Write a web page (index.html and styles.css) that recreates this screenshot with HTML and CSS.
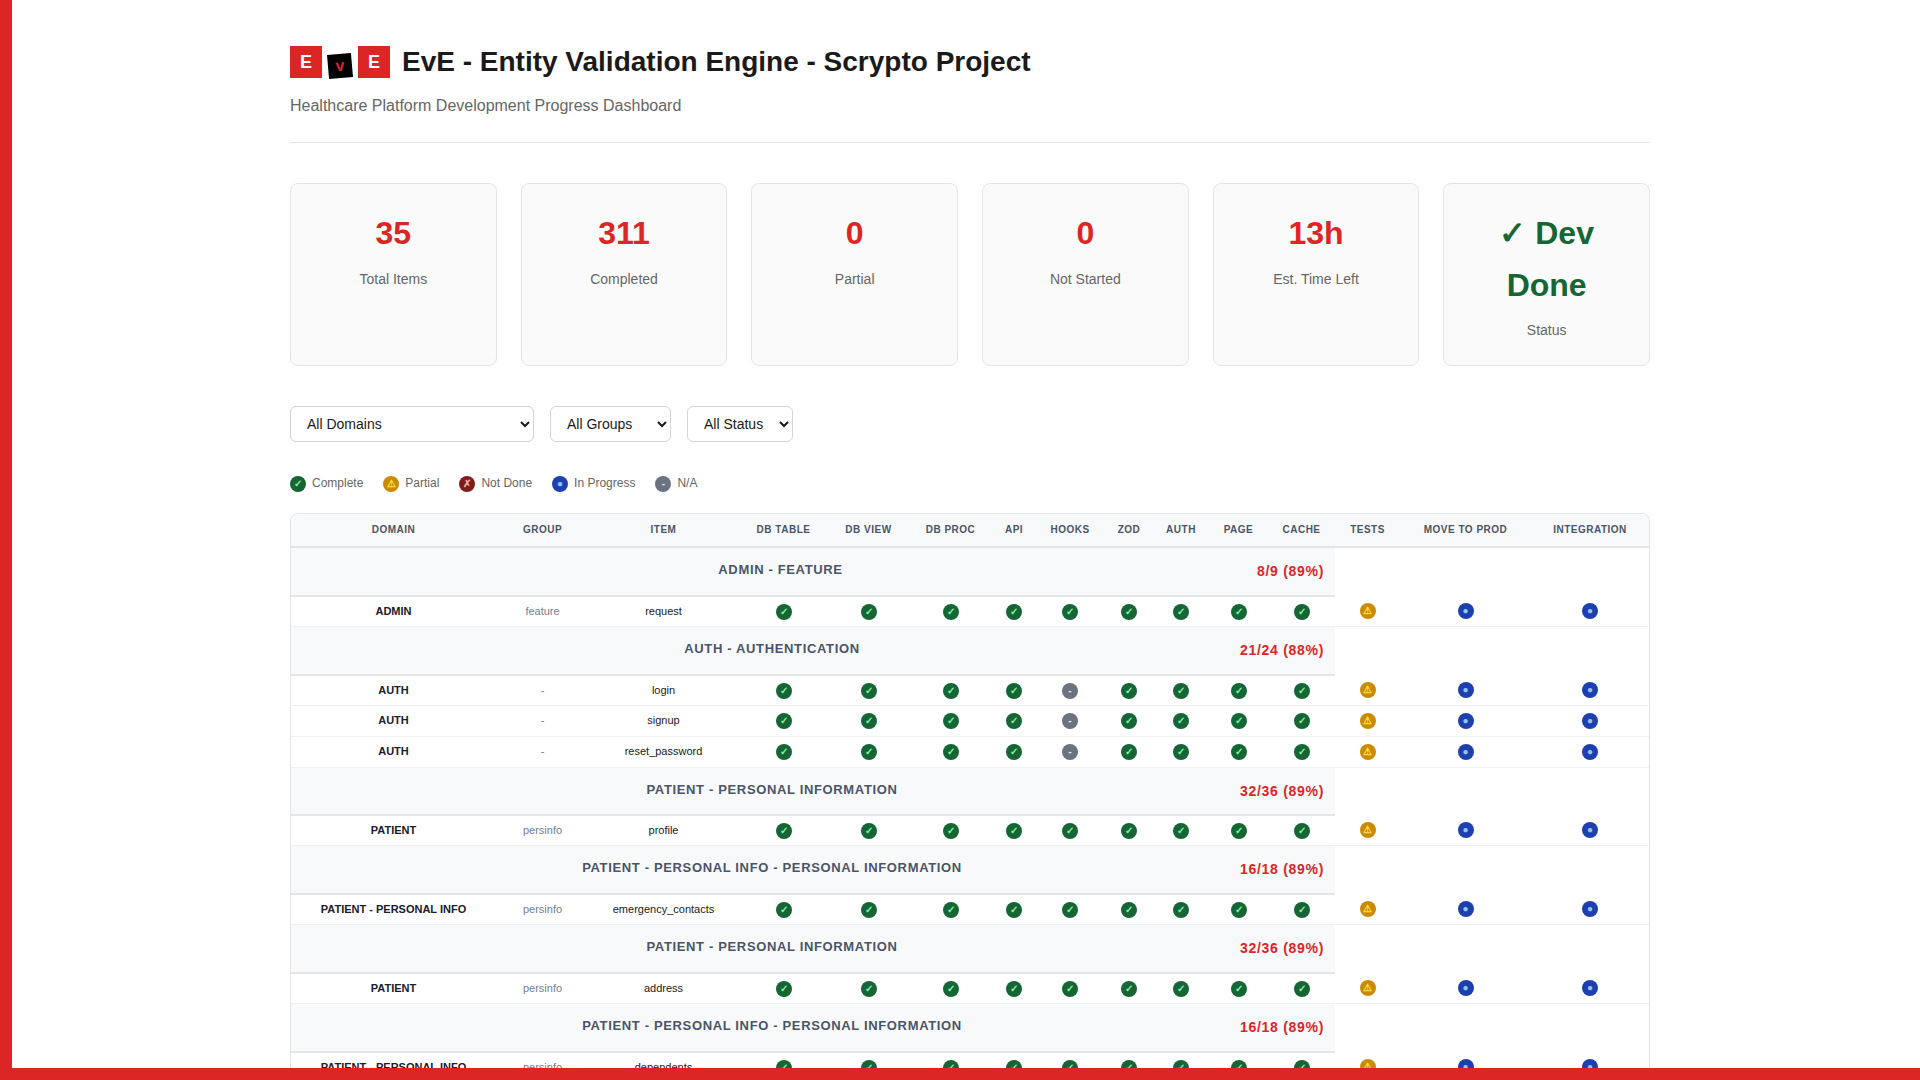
FILE: index.html
```html
<!DOCTYPE html>
<html lang="en">
<head>
<meta charset="utf-8">
<title>EvE - Entity Validation Engine</title>
<link rel="stylesheet" href="styles.css">
</head>
<body>
<div class="edge edge-left"></div>
<div class="edge edge-bottom"></div>
<main class="page">
  <header class="head">
    <div class="title-row">
      <div class="logo">
        <span class="tile">E</span>
        <span class="tile tile-v">v</span>
        <span class="tile">E</span>
      </div>
      <h1>EvE - Entity Validation Engine - Scrypto Project</h1>
    </div>
    <p class="subtitle">Healthcare Platform Development Progress Dashboard</p>
  </header>

  <section class="cards">
    <div class="card"><div class="num">35</div><div class="lbl">Total Items</div></div>
    <div class="card"><div class="num">311</div><div class="lbl">Completed</div></div>
    <div class="card"><div class="num">0</div><div class="lbl">Partial</div></div>
    <div class="card"><div class="num">0</div><div class="lbl">Not Started</div></div>
    <div class="card"><div class="num">13h</div><div class="lbl">Est. Time Left</div></div>
    <div class="card"><div class="num num-ok">✓ Dev Done</div><div class="lbl">Status</div></div>
  </section>

  <section class="filters">
    <select class="sel sel-domain"><option>All Domains</option></select>
    <select class="sel sel-group"><option>All Groups</option></select>
    <select class="sel sel-status"><option>All Status</option></select>
  </section>

  <section class="legend">
    <span class="key"><span class="b ok">✓</span>Complete</span>
    <span class="key"><span class="b pa">⚠</span>Partial</span>
    <span class="key"><span class="b no">✗</span>Not Done</span>
    <span class="key"><span class="b pr">●</span>In Progress</span>
    <span class="key"><span class="b na">-</span>N/A</span>
  </section>

  <div class="table-wrap">
    <table>
      <colgroup>
        <col class="c1"><col class="c2"><col class="c3"><col class="c4"><col class="c5"><col class="c6"><col class="c7"><col class="c8"><col class="c9"><col class="c10"><col class="c11"><col class="c12"><col class="c13"><col class="c14"><col class="c15">
      </colgroup>
      <thead>
        <tr><th>Domain</th><th>Group</th><th>Item</th><th>DB Table</th><th>DB View</th><th>DB Proc</th><th>API</th><th>Hooks</th><th>Zod</th><th>Auth</th><th>Page</th><th>Cache</th><th>Tests</th><th>Move to Prod</th><th>Integration</th></tr>
      </thead>
      <tbody>
        <tr class="grp"><td colspan="12"><div class="grp-in"><span class="grp-t">ADMIN - FEATURE</span><span class="grp-p">8/9 (89%)</span></div></td></tr>
        <tr><td class="dom">ADMIN</td><td class="gr">feature</td><td class="it">request</td><td><span class="b ok">✓</span></td><td><span class="b ok">✓</span></td><td><span class="b ok">✓</span></td><td><span class="b ok">✓</span></td><td><span class="b ok">✓</span></td><td><span class="b ok">✓</span></td><td><span class="b ok">✓</span></td><td><span class="b ok">✓</span></td><td><span class="b ok">✓</span></td><td><span class="b pa">⚠</span></td><td><span class="b pr">●</span></td><td><span class="b pr">●</span></td></tr>

        <tr class="grp"><td colspan="12"><div class="grp-in"><span class="grp-t">AUTH - AUTHENTICATION</span><span class="grp-p">21/24 (88%)</span></div></td></tr>
        <tr><td class="dom">AUTH</td><td class="gr">-</td><td class="it">login</td><td><span class="b ok">✓</span></td><td><span class="b ok">✓</span></td><td><span class="b ok">✓</span></td><td><span class="b ok">✓</span></td><td><span class="b na">-</span></td><td><span class="b ok">✓</span></td><td><span class="b ok">✓</span></td><td><span class="b ok">✓</span></td><td><span class="b ok">✓</span></td><td><span class="b pa">⚠</span></td><td><span class="b pr">●</span></td><td><span class="b pr">●</span></td></tr>
        <tr><td class="dom">AUTH</td><td class="gr">-</td><td class="it">signup</td><td><span class="b ok">✓</span></td><td><span class="b ok">✓</span></td><td><span class="b ok">✓</span></td><td><span class="b ok">✓</span></td><td><span class="b na">-</span></td><td><span class="b ok">✓</span></td><td><span class="b ok">✓</span></td><td><span class="b ok">✓</span></td><td><span class="b ok">✓</span></td><td><span class="b pa">⚠</span></td><td><span class="b pr">●</span></td><td><span class="b pr">●</span></td></tr>
        <tr><td class="dom">AUTH</td><td class="gr">-</td><td class="it">reset_password</td><td><span class="b ok">✓</span></td><td><span class="b ok">✓</span></td><td><span class="b ok">✓</span></td><td><span class="b ok">✓</span></td><td><span class="b na">-</span></td><td><span class="b ok">✓</span></td><td><span class="b ok">✓</span></td><td><span class="b ok">✓</span></td><td><span class="b ok">✓</span></td><td><span class="b pa">⚠</span></td><td><span class="b pr">●</span></td><td><span class="b pr">●</span></td></tr>

        <tr class="grp"><td colspan="12"><div class="grp-in"><span class="grp-t">PATIENT - PERSONAL INFORMATION</span><span class="grp-p">32/36 (89%)</span></div></td></tr>
        <tr><td class="dom">PATIENT</td><td class="gr">persinfo</td><td class="it">profile</td><td><span class="b ok">✓</span></td><td><span class="b ok">✓</span></td><td><span class="b ok">✓</span></td><td><span class="b ok">✓</span></td><td><span class="b ok">✓</span></td><td><span class="b ok">✓</span></td><td><span class="b ok">✓</span></td><td><span class="b ok">✓</span></td><td><span class="b ok">✓</span></td><td><span class="b pa">⚠</span></td><td><span class="b pr">●</span></td><td><span class="b pr">●</span></td></tr>

        <tr class="grp"><td colspan="12"><div class="grp-in"><span class="grp-t">PATIENT - PERSONAL INFO - PERSONAL INFORMATION</span><span class="grp-p">16/18 (89%)</span></div></td></tr>
        <tr><td class="dom">PATIENT - PERSONAL INFO</td><td class="gr">persinfo</td><td class="it">emergency_contacts</td><td><span class="b ok">✓</span></td><td><span class="b ok">✓</span></td><td><span class="b ok">✓</span></td><td><span class="b ok">✓</span></td><td><span class="b ok">✓</span></td><td><span class="b ok">✓</span></td><td><span class="b ok">✓</span></td><td><span class="b ok">✓</span></td><td><span class="b ok">✓</span></td><td><span class="b pa">⚠</span></td><td><span class="b pr">●</span></td><td><span class="b pr">●</span></td></tr>

        <tr class="grp"><td colspan="12"><div class="grp-in"><span class="grp-t">PATIENT - PERSONAL INFORMATION</span><span class="grp-p">32/36 (89%)</span></div></td></tr>
        <tr><td class="dom">PATIENT</td><td class="gr">persinfo</td><td class="it">address</td><td><span class="b ok">✓</span></td><td><span class="b ok">✓</span></td><td><span class="b ok">✓</span></td><td><span class="b ok">✓</span></td><td><span class="b ok">✓</span></td><td><span class="b ok">✓</span></td><td><span class="b ok">✓</span></td><td><span class="b ok">✓</span></td><td><span class="b ok">✓</span></td><td><span class="b pa">⚠</span></td><td><span class="b pr">●</span></td><td><span class="b pr">●</span></td></tr>

        <tr class="grp"><td colspan="12"><div class="grp-in"><span class="grp-t">PATIENT - PERSONAL INFO - PERSONAL INFORMATION</span><span class="grp-p">16/18 (89%)</span></div></td></tr>
        <tr><td class="dom">PATIENT - PERSONAL INFO</td><td class="gr">persinfo</td><td class="it">dependents</td><td><span class="b ok">✓</span></td><td><span class="b ok">✓</span></td><td><span class="b ok">✓</span></td><td><span class="b ok">✓</span></td><td><span class="b ok">✓</span></td><td><span class="b ok">✓</span></td><td><span class="b ok">✓</span></td><td><span class="b ok">✓</span></td><td><span class="b ok">✓</span></td><td><span class="b pa">⚠</span></td><td><span class="b pr">●</span></td><td><span class="b pr">●</span></td></tr>
      </tbody>
    </table>
  </div>
</main>
</body>
</html>
```
FILE: styles.css
```css
* { box-sizing: border-box; }
html, body { height: 100%; overflow: hidden; }
body {
  margin: 0;
  background: #fff;
  color: #1a1a1a;
  font-family: "Liberation Sans", Arial, sans-serif;
  line-height: 1.6;
}
.edge { position: fixed; background: #dc2626; z-index: 5; }
.edge-left { left: 0; top: 0; bottom: 0; width: 12px; }
.edge-bottom { left: 0; right: 0; bottom: 0; height: 12px; }

.page { width: 1360px; margin-left: 290px; padding-top: 40px; }

.head { padding-bottom: 24px; border-bottom: 1px solid #e5e5e5; margin-bottom: 40px; }
.title-row { display: flex; align-items: center; gap: 12px; }
.logo { display: flex; align-items: center; gap: 6px; }
.tile {
  width: 32px; height: 32px; background: #dc2626; color: #fff;
  display: flex; align-items: center; justify-content: center;
  font-weight: 700; font-size: 18px; line-height: 1;
}
.tile-v {
  width: 24px; height: 24px; background: #000; color: #dc2626;
  font-size: 16px; transform: rotate(-5deg); margin-top: 8px;
}
h1 { margin: 0; font-size: 28px; font-weight: 700; line-height: 1.6; color: #1a1a1a; }
.subtitle { margin: 8px 0 0; font-size: 16px; color: #666; }

.cards { display: grid; grid-template-columns: repeat(6, 1fr); gap: 24px; margin-bottom: 40px; }
.card {
  background: #fafafa; border: 1px solid #e5e5e5; border-radius: 8px;
  padding: 24px; text-align: center;
}
.num { font-size: 32px; font-weight: 700; color: #dc2626; margin-bottom: 8px; }
.num-ok { color: #166534; }
.lbl { font-size: 14px; color: #666; }

.filters { display: flex; gap: 16px; margin-bottom: 32px; }
.sel {
  height: 36px; padding: 8px 12px; font-size: 14px; font-family: "Liberation Sans", Arial, sans-serif;
  border: 1px solid #d4d4d4; border-radius: 6px; background: #fff; color: #1a1a1a;
}
.sel-domain { width: 244px; }
.sel-group { width: 121px; }
.sel-status { width: 106px; }

.legend { display: flex; gap: 20px; font-size: 12px; color: #666; margin-bottom: 20px; }
.key { display: flex; align-items: center; gap: 6px; }

.b {
  display: inline-flex; align-items: center; justify-content: center;
  width: 16px; height: 16px; border-radius: 50%;
  font-size: 10px; font-weight: 700; line-height: 1; vertical-align: middle;
}
.ok { background: #166534; color: #86efac; }
.pa { background: #ca8a04; color: #fde047; }
.no { background: #7f1d1d; color: #fca5a5; }
.pr { background: #1e40af; color: #93c5fd; }
.na { background: #6b7280; color: #e5e7eb; }

.table-wrap { border: 1px solid #e5e5e5; border-radius: 8px; overflow: hidden; }
table { width: 100%; border-collapse: collapse; table-layout: fixed; font-size: 11px; }
.c1 { width: 205px; } .c2 { width: 93px; } .c3 { width: 149px; } .c4 { width: 91px; }
.c5 { width: 79px; } .c6 { width: 85px; } .c7 { width: 42px; } .c8 { width: 70px; }
.c9 { width: 48px; } .c10 { width: 56px; } .c11 { width: 59px; } .c12 { width: 67px; }
.c13 { width: 65px; } .c14 { width: 131px; }
th {
  background: #f8f9fa; color: #4a5568; font-size: 10px; font-weight: 700;
  text-transform: uppercase; letter-spacing: 0.5px; text-align: center;
  padding: 8px 4px; border-bottom: 2px solid #e5e5e5; height: 33px;
}
td { padding: 6px 4px; text-align: center; border-bottom: 1px solid #f0f0f0; }
.dom { font-weight: 700; color: #1a202c; }
.gr { color: #718096; }
.it { color: #1a1a1a; }
.grp td { background: #f8f9fa; padding: 12px 11px 12px 13px; border-bottom: 2px solid #e5e5e5; }
.grp-in { display: flex; align-items: flex-start; }
.grp-t { flex: 1; text-align: center; font-size: 13px; font-weight: 700; letter-spacing: 0.65px; color: #4a5568; }
.grp-p { font-size: 14px; font-weight: 700; letter-spacing: 0.7px; color: #dc2626; }
```
